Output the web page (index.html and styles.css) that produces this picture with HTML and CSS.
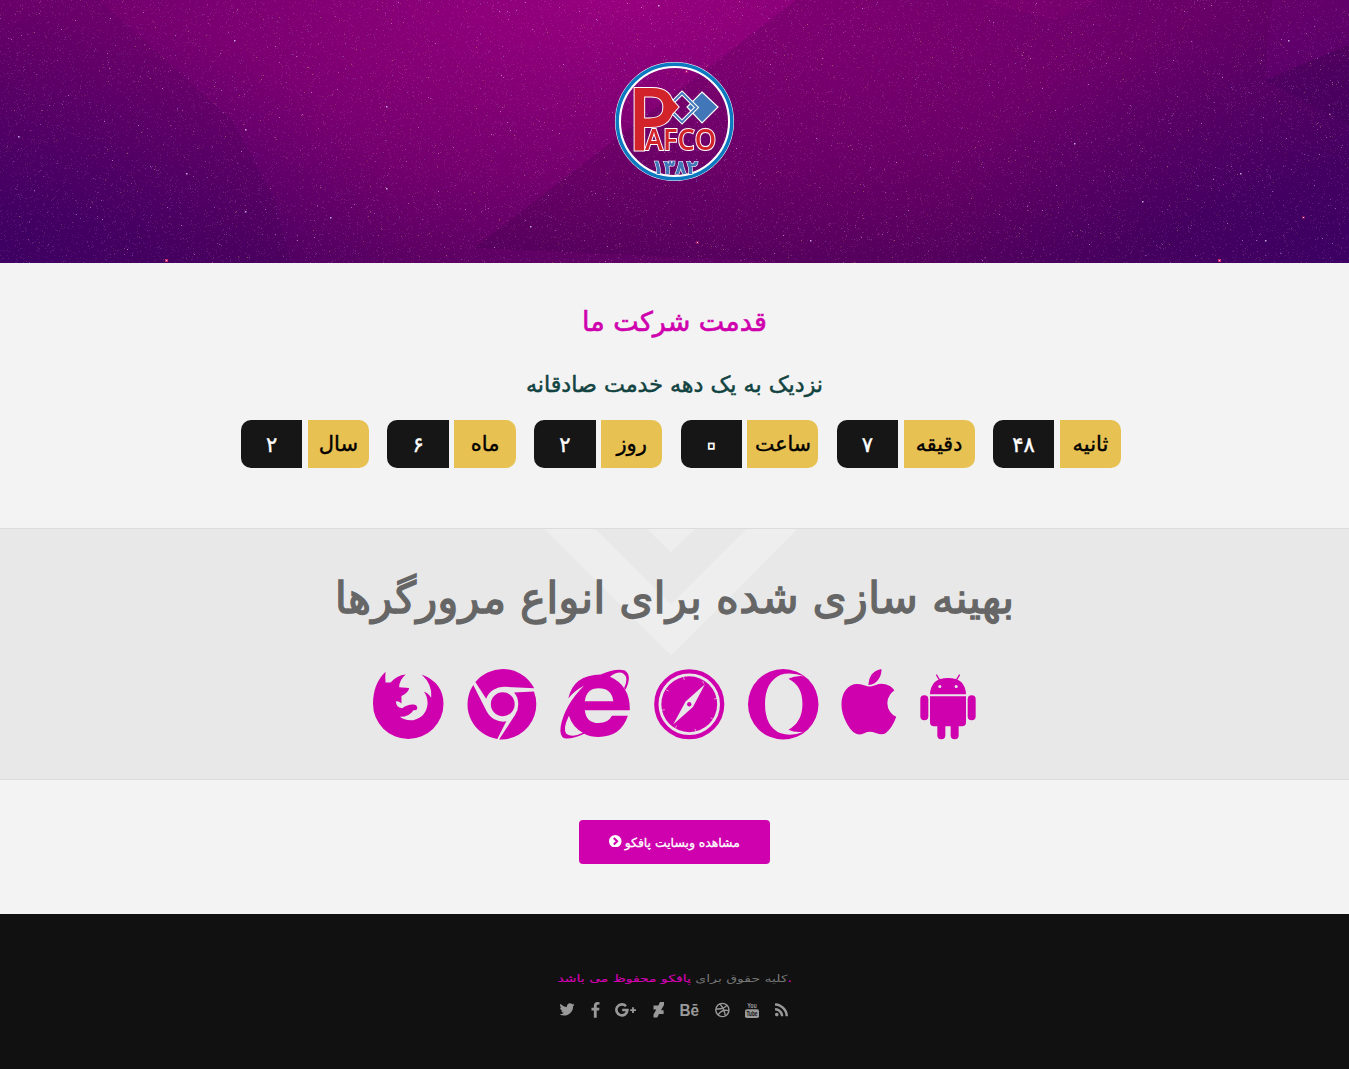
FILE: index.html
```html
<!DOCTYPE html>
<html lang="fa">
<head>
<meta charset="utf-8">
<title>PAFCO</title>
<link rel="stylesheet" href="styles.css">
</head>
<body>
<header class="hero">
  <svg class="facets" viewBox="0 0 1349 263" preserveAspectRatio="none" aria-hidden="true">
    <defs>
      <linearGradient id="shade" x1="0" y1="0" x2="1" y2="0"><stop offset="0" stop-color="#300040" stop-opacity=".22"/><stop offset=".4" stop-color="#300040" stop-opacity=".15"/><stop offset="1" stop-color="#300040" stop-opacity=".04"/></linearGradient>
      <linearGradient id="shade2" x1="1" y1="0" x2="0" y2="0"><stop offset="0" stop-color="#2c0048" stop-opacity=".15"/><stop offset="1" stop-color="#2c0048" stop-opacity=".04"/></linearGradient>
    </defs>
    <path d="M796 0L474 248L800 263H1349V0Z" fill="url(#shade)"/>
    <path d="M52 0H99L232 120L275 200L290 263H0V35Z" fill="url(#shade2)"/>
    <path d="M1272 0L1265 80L1349 45V0Z" fill="#8b00a0" fill-opacity=".12"/>
    <path d="M1265 80L1349 45V125Z" fill="#2b0048" fill-opacity=".15"/>
    <path d="M975 0L1055 20L1100 0Z" fill="#c00090" fill-opacity=".08"/>
  </svg>
  <canvas class="stars" id="stars" width="1349" height="263"></canvas>
  <svg class="logo" viewBox="0 0 120 120" role="img" aria-label="PAFCO">
    <circle cx="59.500" cy="59.500" r="56.500" fill="none" stroke="#fff" stroke-width="6"/>
    <circle cx="59.500" cy="59.500" r="57.300" fill="none" stroke="#0b78bf" stroke-width="3.400"/>
    <path d="M87 30L103 45L87 61L72 45Z" fill="#4176b9" stroke="#fff" stroke-width="1.200"/>
    <path d="M67 31L81.500 45.500L67 60L52.500 45.500Z" fill="none" stroke="#fff" stroke-width="4"/>
    <path d="M67 31L81.500 45.500L67 60L52.500 45.500Z" fill="none" stroke="#4176b9" stroke-width="1.800"/>
    <g class="logo-red">
      <path d="M50 30L63.500 45L50 60Z"/>
      <text class="logo-p" x="12" y="88" textLength="50" lengthAdjust="spacingAndGlyphs">P</text>
      <text class="logo-name" x="30" y="88" textLength="71" lengthAdjust="spacingAndGlyphs">AFCO</text>
    </g>
    <path d="M54 34L62.500 45L54 56Z" fill="#d2232a"/>
    <text class="logo-year" x="60" y="112" text-anchor="middle" textLength="46" lengthAdjust="spacingAndGlyphs">۱۳۸۲</text>
  </svg>
</header>

<section class="age">
  <h1 class="age-title"><span dir="rtl">قدمت شرکت ما</span></h1>
  <h2 class="age-sub"><span dir="rtl">نزدیک به یک دهه خدمت صادقانه</span></h2>
  <div class="counter">
    <div class="unit"><b class="num">۲</b><span class="label">سال</span></div>
    <div class="unit"><b class="num">۶</b><span class="label">ماه</span></div>
    <div class="unit"><b class="num">۲</b><span class="label">روز</span></div>
    <div class="unit"><b class="num zero">۰</b><span class="label wide">ساعت</span></div>
    <div class="unit"><b class="num">۷</b><span class="label wide">دقیقه</span></div>
    <div class="unit"><b class="num pair">۴۸</b><span class="label">ثانیه</span></div>
  </div>
</section>

<section class="browsers">
  <svg class="chevrons" viewBox="0 0 260 126" aria-hidden="true">
    <path d="M-31 -60L130 101L291 -60" fill="none"/>
    <path class="tip" d="M90 -19L130 20L170 -19Z"/>
  </svg>
  <h2 class="browsers-title"><span dir="rtl">بهینه سازی شده برای انواع مرورگرها</span></h2>
  <div class="icons">
    <svg class="icon" viewBox="24 27 213 210"><path d="M62 34Q60 50 62 66L77 66Q95 45 123 42Q103 58 103 81L133 83Q132 97 110 107L110 130Q100 121 93 124Q94 142 112 144Q130 132 145 133Q158 134 158 144Q156 152 147 149Q132 171 105 170Q120 182 145 180Q185 172 189 130Q189 108 178 94Q190 97 200 112Q204 72 171 42Q237 67 237 131A106.500 106 0 0 1 24 131Q24 70 62 34Z"/></svg>
    <svg class="icon" viewBox="0 0 1792 1792"><path d="M893 0q240-2 451 120 232 134 352 372l-742-39q-160-9-294 74.500t-185 229.500l-276-424q128-159 311-245.500t383-87.500zM146 405l337 663q72 143 211 217t293 45l-230 451q-212-33-385-157.500t-272.500-316-99.500-411.500q0-267 146-491zM1689 574q58 150 59.500 310.500t-48.500 306-153 272-246 209.500q-230 133-498 119l405-623q88-131 82.500-290.500t-106.500-277.500z"/><circle cx="896" cy="896" r="302"/></svg>
    <svg class="icon" viewBox="32 27 213 210"><path d="M243 150H107Q111 189 149 189Q178 189 189 167H237Q216 231 148 231Q125 231 105 221Q70 238 45 235Q30 228 34 200Q45 135 105 75Q70 95 57 115Q72 43 155 42Q200 22 228 30Q251 45 230 88L226 82Q241 50 222 38Q205 32 183 49Q244 75 243 150ZM107 123H193Q188 84 149 84Q112 84 107 123ZM59 167Q40 205 51 221Q70 234 101 218Q70 202 59 167Z" fill-rule="evenodd"/></svg>
    <svg class="icon" viewBox="312.500 26 211 211"><circle cx="418" cy="131.500" r="98.500" fill="none" stroke="#cf00ad" stroke-width="13"/><circle cx="418" cy="131.500" r="83.500"/><g class="cut"><path d="M465 72L429 140L370 192L407 123Z"/><path class="ticks" d="M401 50L403 59M348 88L356 92M335 149L345 148M377 202L380 195M438 213L435 205M490 177L482 172M501 114L492 116M458 62L462 70"/></g><circle cx="418" cy="131.500" r="6.500"/></svg>
    <svg class="icon" viewBox="24 27 211 210"><circle cx="129.500" cy="132" r="105.500"/><path class="cut" d="M193 48Q150 34 122 44Q75 65 75 131Q75 200 122 219Q155 229 191 214Q165 218 145 208Q187 185 187 131Q187 77 145 56Q165 45 193 48Z"/></svg>
    <svg class="icon apple" viewBox="207 0 1396 1792"><path d="M1585 1215q-39 125-123 250-129 196-257 196-49 0-140-32-86-32-151-32-61 0-142 33-81 34-132 34-152 0-301-259-147-261-147-503 0-228 113-374 113-144 284-144 72 0 177 30 104 30 138 30 45 0 143-34 102-34 173-34 119 0 213 65 52 36 104 100-79 67-114 118-65 94-65 207 0 124 69 223t158 126zM1209 42q0 61-29 136-30 75-93 138-54 54-108 72-37 11-104 17 3-149 78-257 74-107 250-148 1 3 2.500 11t2.500 11q0 4 .5 10t.5 10z"/></svg>
    <svg class="icon android" viewBox="540 27 168 210"><path d="M570 102Q572 53 624 53Q676 53 678 102ZM570 108H678V186Q678 198 666 198H582Q570 198 570 186Z"/><rect x="541" y="105" width="24" height="75" rx="12"/><rect x="683" y="105" width="24" height="75" rx="12"/><rect x="592" y="180" width="24" height="57" rx="12"/><rect x="632" y="180" width="24" height="57" rx="12"/><path d="M589 43L600 61M659 43L648 61" stroke="#cf00ad" stroke-width="4"/><g class="cut"><circle cx="599.500" cy="79" r="4.500"/><circle cx="648.500" cy="79" r="4.500"/></g></svg>
  </div>
</section>

<section class="visit">
  <a class="button" href="#">
    <svg class="go" viewBox="0 0 12 12"><circle cx="6" cy="6" r="6"/><path d="M4.600 2.800L7.800 6L4.600 9.200"/></svg>
    <span class="button-text" dir="rtl">مشاهده وبسایت پافکو</span>
  </a>
</section>

<footer class="footer">
  <p class="copy"><span>کلیه حقوق برای <b>پافکو محفوظ می باشد</b></span><b>.</b></p>
  <div class="social">
    <svg width="16" height="16" viewBox="60 128 1664 1664"><path d="M1684 408q-67 98-162 167 1 14 1 42 0 130-38 259.500t-115.500 248.500-184.500 210.500-258 146-323 54.500q-271 0-496-145 35 4 78 4 225 0 401-138-105-2-188-64.500t-114-159.500q33 5 61 5 43 0 85-11-112-23-185.500-111.500t-73.500-205.500v-4q68 38 146 41-66-44-105-115t-39-154q0-88 44-163 121 149 294.500 238.500t371.500 99.500q-8-38-8-74 0-134 94.500-228.500t228.500-94.500q140 0 236 102 109-21 205-78-37 115-142 178 93-10 186-50z"/></svg>
    <svg width="9" height="16" viewBox="430 0 960 1700"><path d="M1343 12v264h-157q-86 0-116 36t-30 108v189h293l-39 296h-254v759h-306v-759h-255v-296h255v-218q0-186 104-288.500t277-102.500q147 0 228 12z"/></svg>
    <svg width="22" height="16" viewBox="0 0 22 16"><path class="line" d="M11 4.200A5.500 5.500 0 1 0 12.400 8H7.200"/><path class="line plus" d="M18 5.200V11M15.200 8.100H21"/></svg>
    <svg width="11" height="16" viewBox="0 0 11 16"><path d="M11 0V3L8 8.200H10.600V12H6L4.300 15.600H0.500V12.600L3.300 7.400H.5V3.600H5.300L7 0Z"/></svg>
    <svg width="19" height="16" viewBox="0 0 19 16"><text class="be" x="-.5" y="13.500" textLength="19.500" lengthAdjust="spacingAndGlyphs">Bē</text></svg>
    <svg width="15" height="16" viewBox="0 0 15 16"><path class="thin" d="M.8 8A6.600 6.600 0 1 0 14 8A6.600 6.600 0 1 0 .8 8M5 2Q9.500 7 10.300 14M1 7Q9 7.500 12 3.200M3.300 12.700Q7 6.700 14 8.700"/></svg>
    <svg width="14" height="16" viewBox="0 0 14 16"><text class="you" x="2.200" y="6" textLength="9.600" lengthAdjust="spacingAndGlyphs">You</text><rect y="7.300" width="14" height="8.700" rx="1.800"/><text class="tube" x="1.500" y="14.300" textLength="11" lengthAdjust="spacingAndGlyphs">Tube</text></svg>
    <svg width="13" height="16" viewBox="192 0 1408 1700"><path d="M576 1344q0 80-56 136t-136 56-136-56-56-136 56-136 136-56 136 56 56 136zm512 123q2 28-17 48-18 21-47 21h-135q-25 0-43-16.500t-20-41.500q-22-229-184.500-391.500t-391.500-184.500q-25-2-41.500-20t-16.500-43v-135q0-29 21-47 17-17 43-17h5q160 13 306 80.500t259 181.500q114 113 181.500 259t80.500 306zm512 2q2 27-18 47-18 20-46 20h-143q-26 0-44.500-17.500t-19.500-42.500q-12-215-101-408.500t-231.500-336-336-231.500-408.500-102q-25-1-42.500-19.500t-17.500-43.500v-143q0-28 20-46 18-18 44-18h3q262 13 501.500 120t425.500 294q187 186 294 425.500t120 501.500z"/></svg>
  </div>
</footer>
<script src="stars.js"></script>
</body>
</html>
```
FILE: styles.css
```css
* { box-sizing: border-box; }
body { margin: 0; background: #f3f3f3; font-family: "DejaVu Sans", "Liberation Sans", sans-serif; }
h1, h2, p { margin: 0; font-weight: 400; }

.hero {
  position: relative;
  height: 263px;
  padding-top: 62px;
  display: flex;
  justify-content: center;
  align-items: flex-start;
  background:
    radial-gradient(ellipse 420px 260px at 0 100%, rgba(50, 0, 105, .6), transparent),
    radial-gradient(ellipse 420px 260px at 100% 100%, rgba(45, 0, 105, .6), transparent),
    radial-gradient(ellipse 850px 310px at 46% 0, #98007e, #76006f 55%, #52005e 100%);
}
.facets, .stars { position: absolute; left: 0; top: 0; width: 100%; height: 100%; }
.logo { position: relative; width: 120px; height: 120px; }
.logo-red { fill: #d2232a; stroke: #fff; stroke-width: 2px; paint-order: stroke; }
.logo-p { font: 600 86px "Open Sans", sans-serif; }
.logo-name { font: 600 29px "Open Sans", sans-serif; }
.logo-year { font: 700 20px "DejaVu Sans", sans-serif; fill: #4176b9; stroke: #fff; stroke-width: 1.2px; paint-order: stroke; }

.age { height: 265px; padding-top: 36px; display: flex; flex-direction: column; align-items: center; }
.age-title { height: 44px; line-height: 46px; font-size: 27px; color: #cf00ad; white-space: nowrap; -webkit-text-stroke: .6px; }
.age-sub { height: 36px; margin-top: 23px; line-height: 37px; font-size: 22.2px; color: #114341; white-space: nowrap; -webkit-text-stroke: .5px; }
.age-title span, .age-sub span, .browsers-title span { display: inline-block; }
.counter { display: flex; gap: 18.2px; margin: 18px 0 0 13px; }
.unit { display: flex; gap: 5.4px; }
.num, .label { width: 61.5px; height: 48px; line-height: 48px; text-align: center; font-size: 21px; font-weight: 400; -webkit-text-stroke: .4px; }
.num { background: #161616; color: #fff; border-radius: 10px 0 0 10px; line-height: 50px; }
.pair { letter-spacing: 2px; }
.zero { color: #161616; font-size: 30px; -webkit-text-stroke: 3.4px #fff; paint-order: stroke; }
.label { background: #e8c153; color: #000; border-radius: 0 10px 10px 0; }
.label.wide { width: 71px; font-size: 20.5px; }

.browsers { position: relative; height: 252px; border: solid #dcdcdc; border-width: 1px 0; background: #e8e8e8; }
.chevrons { position: absolute; left: 541px; top: 0; width: 260px; height: 126px; }
.chevrons path { stroke: #eee; stroke-width: 36px; stroke-linejoin: miter; }
.chevrons .tip { fill: #eee; stroke-width: 5px; stroke-linejoin: round; }
.browsers-title { position: relative; height: 70px; line-height: 70px; margin-top: 34px; text-align: center; color: #666; font-size: 43.8px; white-space: nowrap; -webkit-text-stroke: 1.3px; }
.icons { display: flex; justify-content: center; gap: 23.3px; margin-top: 36px; }
.icon { position: relative; width: 70.5px; height: 70.5px; fill: #cf00ad; overflow: visible; }
.icon:nth-child(2) { width: 71.5px; margin-right: -1px; }
.icon.apple { width: 55px; }
.icon.android { width: 56px; }
.cut { fill: #e8e8e8; }
.ticks { stroke: #e8e8e8; stroke-width: 2px; }

.visit { height: 134px; padding-top: 40px; display: flex; justify-content: center; align-items: flex-start; }
.button { width: 191px; height: 44px; display: flex; align-items: center; justify-content: center; gap: 3px; border-radius: 4px; background: #cf00ad; color: #fff; font-size: 12.4px; text-decoration: none; white-space: nowrap; -webkit-text-stroke: .3px; }
.go { width: 12.5px; height: 12.5px; margin-top: -2px; fill: #fff; }
.go path { fill: none; stroke: #cf00ad; stroke-width: 2px; }

.footer { height: 155px; padding-top: 56px; display: flex; flex-direction: column; align-items: center; background: #111; }
.copy { height: 18px; line-height: 18px; font-size: 10px; color: #777; white-space: nowrap; transform: scaleX(1.4); }
.copy b { color: #cf00ad; font-weight: 400; -webkit-text-stroke: .2px; }
.social { display: flex; gap: 15.7px; margin: 14px 2px 0 0; }
.social svg { fill: #999; }
.social .line { fill: none; stroke: #999; stroke-width: 2.6px; }
.social .plus { stroke-width: 1.8px; }
.social .thin { fill: none; stroke: #999; stroke-width: 1.4px; }
.be { font: 700 16px "Liberation Sans", sans-serif; }
.you { font: 700 8px "Liberation Sans", sans-serif; }
.social .tube { font: 700 7px "Liberation Sans", sans-serif; fill: #111; }
```
FILE: stars.js
```js
// Scatter fine coloured dust over the hero, then the brighter stars.
var ctx = document.getElementById('stars').getContext('2d');
var seed = 41;
function rnd() { seed = (seed * 16807) % 2147483647; return seed / 2147483647; }
var tints = ['255,190,255', '200,150,100', '150,120,230', '230,90,200', '40,0,60'];
for (var i = 0; i < 45000; i++) {
  ctx.fillStyle = 'rgba(' + tints[Math.floor(rnd() * 5)] + ',' + (0.04 + rnd() * 0.15) + ')';
  ctx.fillRect(Math.floor(rnd() * 1349), Math.floor(rnd() * 263), 1, 1);
}
for (i = 0; i < 1500; i++) {
  ctx.fillStyle = 'rgba(' + tints[Math.floor(rnd() * 4)] + ',' + (0.2 + rnd() * 0.4) + ')';
  ctx.fillRect(Math.floor(rnd() * 1349), Math.floor(rnd() * 263), 1, 1);
}
[[658, 5], [234, 40], [386, 106], [245, 129], [18, 136], [186, 173], [386, 188], [245, 211], [330, 217], [810, 240], [1288, 40], [1240, 173], [1142, 201], [1265, 240], [1074, 143], [530, 226]].forEach(function (p) {
  ctx.fillStyle = 'rgba(225,205,255,.8)';
  ctx.fillRect(p[0], p[1], 1.5, 1.5);
});
[[166, 260], [1219, 260], [697, 242], [686, 71], [1303, 217]].forEach(function (p, n) {
  ctx.fillStyle = n < 2 ? 'rgba(255,60,120,.7)' : 'rgba(255,60,120,.35)';
  ctx.fillRect(p[0] - 1, p[1] - 1, 3, 3);
  ctx.fillStyle = '#ffc0d0';
  ctx.fillRect(p[0], p[1], 1, 1);
});
```
